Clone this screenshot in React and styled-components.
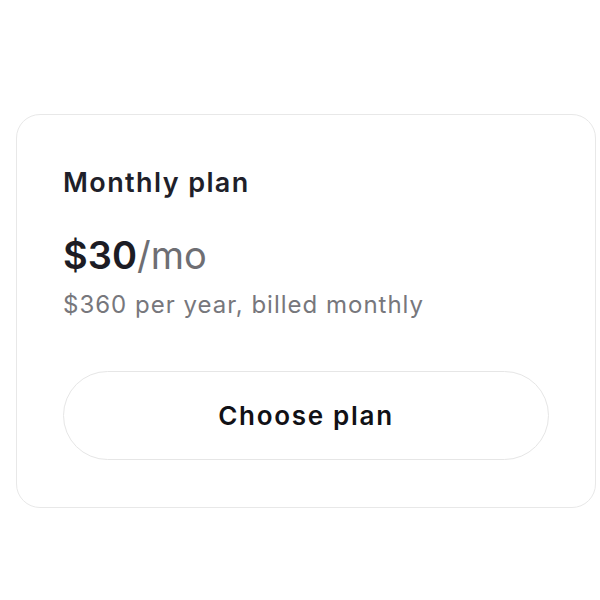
import React from 'react'
import styled, { createGlobalStyle } from 'styled-components'

const GlobalStyle = createGlobalStyle`
    body {
        margin: 0;
        background: #ffffff;
        font-family: Inter, "Liberation Sans", sans-serif;
    }
`

const Page = styled.div`
    padding: 114px 4px 0 16px;
`

const Card = styled.div`
    box-sizing: border-box;
    width: 580px;
    height: 394px;
    border: 1.5px solid #e8e8e8;
    border-radius: 24px;
    padding: 50px 46px 0 46px;
    display: flex;
    flex-direction: column;
`

const Title = styled.h2`
    margin: 0;
    font-size: 27px;
    font-weight: 600;
    letter-spacing: 1.4px;
    color: #1f1f2a;
    line-height: 36px;
`

const Price = styled.div`
    margin-top: 31px;
    font-size: 38px;
    line-height: 46px;
    color: #1c1c24;
`

const Amount = styled.span`
    font-weight: 600;
`

const Period = styled.span`
    font-weight: 400;
    color: #6e6e73;
`

const Note = styled.p`
    margin: 12px 0 0 0;
    font-size: 24px;
    line-height: 30px;
    letter-spacing: 1px;
    color: #77777c;
`

const Button = styled.button`
    margin-top: 51px;
    width: 486px;
    height: 89px;
    border: 1.5px solid #e6e6e6;
    border-radius: 45px;
    background: #ffffff;
    font-family: inherit;
    font-size: 26px;
    font-weight: 600;
    letter-spacing: 1.7px;
    color: #111116;
    cursor: pointer;
`

function App() {
    return (
        <>
            <GlobalStyle />
            <Page>
                <Card>
                    <Title>Monthly plan</Title>
                    <Price>
                        <Amount>$30</Amount><Period>/mo</Period>
                    </Price>
                    <Note>$360 per year, billed monthly</Note>
                    <Button>Choose plan</Button>
                </Card>
            </Page>
        </>
    )
}

export default App
